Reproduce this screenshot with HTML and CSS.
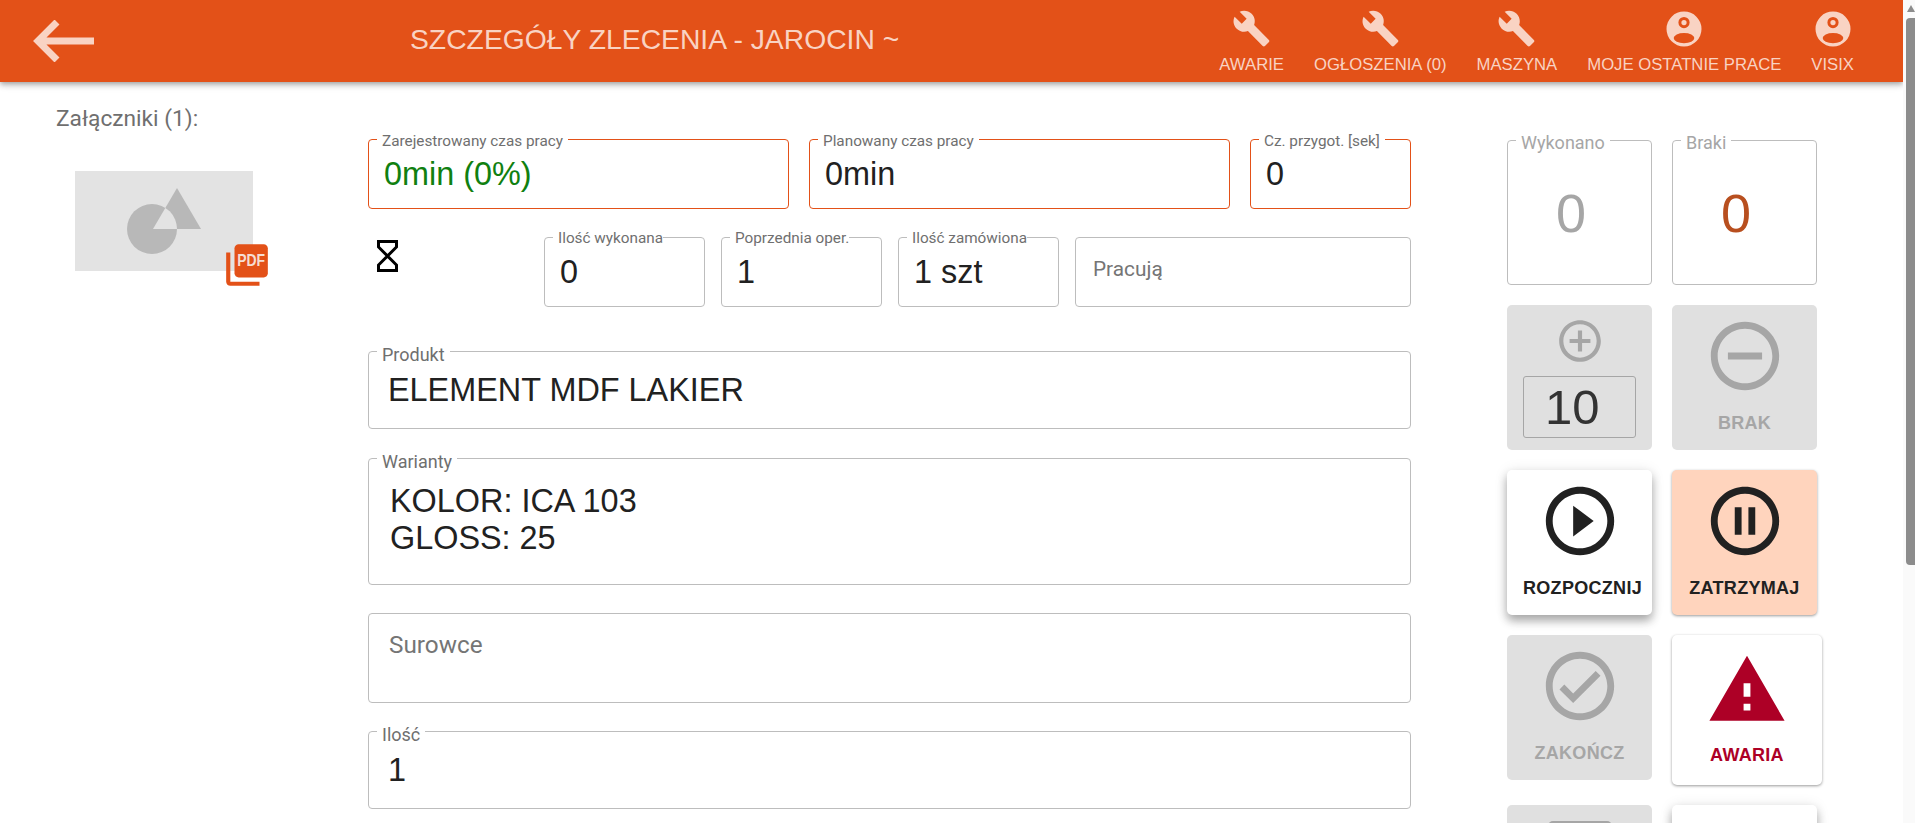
FILE: index.html
```html
<!DOCTYPE html>
<html lang="pl">
<head>
    <meta charset="UTF-8">
    <meta name="viewport" content="width=device-width, initial-scale=1.0">
    <title>Szczegóły zlecenia</title>
    <link rel="stylesheet" href="styles.css">
</head>
<body>
    <svg class="sprite" xmlns="http://www.w3.org/2000/svg">
        <symbol id="i-build" viewBox="0 0 24 24"><path d="M22.7 19l-9.1-9.1c.9-2.3.4-5-1.5-6.9-2-2-5-2.4-7.4-1.3L9 6 6 9 1.6 4.7C.4 7.1.9 10.1 2.9 12.1c1.9 1.9 4.6 2.4 6.9 1.5l9.1 9.1c.4.4 1 .4 1.4 0l2.3-2.3c.5-.4.5-1.1.1-1.4z"/></symbol>
        <symbol id="i-account" viewBox="0 0 24 24"><path fill-rule="evenodd" d="M12 2a10 10 0 1 0 0 20a10 10 0 1 0 0-20z M12 5.100a3.200 3.200 0 1 0 0 6.400a3.200 3.200 0 1 0 0-6.400z M12 6.800a1.500 1.500 0 1 0 0 3a1.500 1.500 0 1 0 0-3z M6.100 17.200a5.900 2.900 0 1 0 11.800 0a5.900 2.900 0 1 0 -11.800 0z"/></symbol>
        <symbol id="i-plus" viewBox="0 0 24 24"><path fill-rule="evenodd" d="M13 7h-2v4H7v2h4v4h2v-4h4v-2h-4V7zm-1-5C6.48 2 2 6.48 2 12s4.48 10 10 10 10-4.48 10-10S17.52 2 12 2zm0 18c-4.410 0-8-3.590-8-8s3.590-8 8-8 8 3.590 8 8-3.590 8-8 8z"/></symbol>
        <symbol id="i-minus" viewBox="0 0 24 24"><path fill-rule="evenodd" d="M7 11v2h10v-2H7zm5-9C6.48 2 2 6.48 2 12s4.48 10 10 10 10-4.48 10-10S17.52 2 12 2zm0 18c-4.410 0-8-3.590-8-8s3.590-8 8-8 8 3.590 8 8-3.590 8-8 8z"/></symbol>
        <symbol id="i-play" viewBox="0 0 24 24"><path fill-rule="evenodd" d="M10 16.500l6-4.500-6-4.500v9zM12 2C6.48 2 2 6.48 2 12s4.48 10 10 10 10-4.480 10-10S17.520 2 12 2zm0 18c-4.410 0-8-3.590-8-8s3.590-8 8-8 8 3.590 8 8-3.590 8-8 8z"/></symbol>
        <symbol id="i-pause" viewBox="0 0 24 24"><path fill-rule="evenodd" d="M9 16h2V8H9v8zm3-14C6.48 2 2 6.48 2 12s4.48 10 10 10 10-4.480 10-10S17.520 2 12 2zm0 18c-4.410 0-8-3.590-8-8s3.590-8 8-8 8 3.590 8 8-3.590 8-8 8zm1-4h2V8h-2v8z"/></symbol>
        <symbol id="i-check" viewBox="0 0 24 24"><path fill-rule="evenodd" d="M12 2C6.48 2 2 6.48 2 12s4.48 10 10 10 10-4.480 10-10S17.520 2 12 2zm0 18c-4.420 0-8-3.580-8-8s3.580-8 8-8 8 3.580 8 8-3.580 8-8 8zm4.590-12.420L10 14.170l-2.590-2.580L6 13l4 4 8-8z"/></symbol>
        <symbol id="i-warning" viewBox="0 0 24 24"><path d="M1 21h22L12 2 1 21zm12-3h-2v-2h2v2zm0-4h-2v-4h2v4z"/></symbol>
    </svg>

    <div class="page">
        <div class="main">
            <header class="topbar">
                <a class="back" href="#" aria-label="Wstecz">
                    <svg width="62" height="42" viewBox="0 0 62 42"><path d="M24 2 L5 21 L24 40 M5 21 H61" fill="none" stroke="currentColor" stroke-width="7"/></svg>
                </a>
                <h1 class="title">SZCZEGÓŁY ZLECENIA - JAROCIN ~</h1>
                <nav class="nav">
                    <a class="nav-item" href="#"><svg class="nav-icon"><use href="#i-build"/></svg>AWARIE</a>
                    <a class="nav-item" href="#"><svg class="nav-icon"><use href="#i-build"/></svg>OGŁOSZENIA (0)</a>
                    <a class="nav-item" href="#"><svg class="nav-icon"><use href="#i-build"/></svg>MASZYNA</a>
                    <a class="nav-item" href="#"><svg class="nav-icon nav-icon-user"><use href="#i-account"/></svg>MOJE OSTATNIE PRACE</a>
                    <a class="nav-item" href="#"><svg class="nav-icon nav-icon-user"><use href="#i-account"/></svg>VISIX</a>
                </nav>
            </header>

            <div class="content">
                <aside class="attachments">
                    <div class="attachments-title">Załączniki (1):</div>
                    <div class="thumb">
                        <svg class="thumb-img" width="178" height="100" viewBox="0 0 178 100">
                            <defs><clipPath id="thumb-circle"><circle cx="77" cy="58" r="25"/></clipPath></defs>
                            <rect width="178" height="100" fill="#e3e3e3"/>
                            <circle cx="77" cy="58" r="25" fill="#b8b8b8"/>
                            <path d="M102 17 L126 58 H78 Z" fill="#b8b8b8"/>
                            <path d="M102 17 L126 58 H78 Z" fill="#e3e3e3" clip-path="url(#thumb-circle)"/>
                        </svg>
                        <svg class="thumb-pdf" width="50" height="50" viewBox="0 0 24 24">
                            <path d="M20 2H8c-1.100 0-2 .9-2 2v12c0 1.100.9 2 2 2h12c1.100 0 2-.9 2-2V4c0-1.100-.9-2-2-2z" fill="#e35118"/>
                            <path d="M4 6H2v14c0 1.100.9 2 2 2h14v-2H4V6z" fill="#e35118"/>
                            <text class="pdf-text" x="7.300" y="12.700" textLength="13.400" lengthAdjust="spacingAndGlyphs">PDF</text>
                        </svg>
                    </div>
                </aside>

                <section class="details">
                    <div class="row row-top">
                        <div class="field field-accent field-grow"><span class="field-label">Zarejestrowany czas pracy</span><span class="value value-green">0min (0%)</span></div>
                        <div class="field field-accent field-grow"><span class="field-label">Planowany czas pracy</span><span class="value">0min</span></div>
                        <div class="field field-accent field-prep"><span class="field-label">Cz. przygot. [sek]</span><span class="value">0</span></div>
                    </div>
                    <div class="row row-counts">
                        <div class="hourglass">
                            <svg width="21" height="32" viewBox="0 0 21 32"><path d="M1.500 1.500 H19.500 V7 L1.500 25 V30.500 H19.500 V25 L1.500 7 Z" fill="none" stroke="#000" stroke-width="3"/></svg>
                        </div>
                        <div class="field field-small"><span class="field-label field-label-tight">Ilość wykonana</span><span class="value">0</span></div>
                        <div class="field field-small"><span class="field-label field-label-tight">Poprzednia oper.</span><span class="value">1</span></div>
                        <div class="field field-small"><span class="field-label field-label-tight">Ilość zamówiona</span><span class="value">1 szt</span></div>
                        <div class="field field-grow"><span class="placeholder placeholder-small">Pracują</span></div>
                    </div>
                    <div class="field field-product"><span class="field-label field-label-big">Produkt</span><span class="value value-product">ELEMENT MDF LAKIER</span></div>
                    <div class="field field-variants"><span class="field-label field-label-big">Warianty</span><span class="value value-variants">KOLOR: ICA 103<br>GLOSS: 25</span></div>
                    <div class="field field-materials"><span class="placeholder">Surowce</span></div>
                    <div class="field field-product field-qty"><span class="field-label field-label-big">Ilość</span><span class="value value-product">1</span></div>
                </section>

                <section class="actions">
                    <div class="stat"><span class="stat-label">Wykonano</span><span class="stat-value">0</span></div>
                    <div class="stat"><span class="stat-label">Braki</span><span class="stat-value stat-value-bad">0</span></div>

                    <div class="tile tile-off">
                        <svg class="icon-add"><use href="#i-plus"/></svg>
                        <div class="step-input">10</div>
                    </div>
                    <div class="tile tile-off">
                        <svg class="icon"><use href="#i-minus"/></svg>
                        <span class="tile-label">BRAK</span>
                    </div>
                    <div class="tile tile-raised">
                        <svg class="icon"><use href="#i-play"/></svg>
                        <span class="tile-label tile-label-start">ROZPOCZNIJ</span>
                    </div>
                    <div class="tile tile-active">
                        <svg class="icon"><use href="#i-pause"/></svg>
                        <span class="tile-label">ZATRZYMAJ</span>
                    </div>
                    <div class="tile tile-off">
                        <svg class="icon"><use href="#i-check"/></svg>
                        <span class="tile-label">ZAKOŃCZ</span>
                    </div>
                    <div class="tile tile-alarm">
                        <svg class="icon"><use href="#i-warning"/></svg>
                        <span class="tile-label">AWARIA</span>
                    </div>
                    <div class="tile tile-off"><span class="tile-stub"></span></div>
                    <div class="tile tile-raised"></div>
                </section>
            </div>
        </div>

        <div class="scrollbar">
            <span class="scroll-arrow"></span>
            <span class="scroll-thumb"></span>
        </div>
    </div>
</body>
</html>
```

FILE: styles.css
```css
* {
    box-sizing: border-box;
}
html, body {
    height: 100%;
}
body {
    margin: 0;
    overflow: hidden;
    background-color: #fff;
    color: #212121;
    font-family: "Liberation Sans", Arial, sans-serif;
}
.sprite {
    display: none;
}
.page {
    display: flex;
    height: 100vh;
}
.main {
    flex: 1;
    min-width: 0;
    overflow: hidden;
}

/* top bar */
.topbar {
    position: relative;
    z-index: 2;
    display: flex;
    height: 82px;
    background-color: #e35118;
    color: #f9d3c3;
    box-shadow: 0 2px 4px -1px rgba(0, 0, 0, .2), 0 4px 5px rgba(0, 0, 0, .14), 0 1px 10px rgba(0, 0, 0, .12);
}
.back {
    display: block;
    height: 42px;
    margin: 20px 0 0 33px;
    color: #f9d3c3;
}
.title {
    margin: 21px 0 0 315px;
    font-size: 28.300px;
    font-weight: 400;
    line-height: 36px;
}
.nav {
    display: flex;
    margin-left: auto;
    padding-right: 34px;
}
.nav-item {
    display: flex;
    flex-direction: column;
    align-items: center;
    padding: 8px 15px 0;
    color: #f9d3c3;
    font-size: 16.700px;
    line-height: 18px;
    text-decoration: none;
}
.nav-icon {
    width: 39px;
    height: 39px;
    margin: 1px 0 8px;
    fill: currentColor;
}
.nav-icon-user {
    width: 42px;
    height: 42px;
    margin: 0 0 6px;
}

.content {
    display: flex;
    align-items: flex-start;
}

/* attachments */
.attachments {
    flex: none;
    width: 368px;
    padding: 24px 0 0 56px;
}
.attachments-title {
    color: #6f6f6f;
    font-family: Roboto, sans-serif;
    font-size: 22.700px;
    line-height: 26px;
}
.thumb {
    position: relative;
    width: 178px;
    height: 100px;
    margin: 39px 0 0 19px;
}
.thumb-img {
    display: block;
}
.thumb-pdf {
    position: absolute;
    left: 147px;
    top: 69px;
}
.pdf-text {
    fill: #f6ddd2;
    font-size: 7.600px;
    font-weight: 700;
}

/* fields */
.details {
    flex: none;
    width: 1043px;
    padding-top: 57px;
}
.row {
    display: flex;
}
.row-top {
    gap: 20px;
    margin-bottom: 28px;
}
.row-counts {
    gap: 16px;
    margin-bottom: 44px;
}
.field {
    position: relative;
    display: flex;
    align-items: center;
    height: 70px;
    padding: 0 15px;
    border: 1px solid #bdbdbd;
    border-radius: 4px;
}
.field-accent {
    border-color: #e35118;
}
.field-grow {
    flex: 1;
}
.field-prep {
    flex: none;
    width: 161px;
}
.field-small {
    flex: none;
    width: 161px;
}
.field-label {
    position: absolute;
    left: 8px;
    top: -8px;
    padding: 0 5px;
    background-color: #fff;
    color: #6f6f6f;
    font-family: Roboto, sans-serif;
    font-size: 15.300px;
    line-height: 18px;
    white-space: nowrap;
}
.field-label-tight {
    top: -9px;
    padding-right: 0;
}
.field-label-big {
    top: -8px;
    font-size: 18px;
    line-height: 21px;
}
.value {
    color: #212121;
    font-size: 32.400px;
    line-height: 37px;
}
.value-green {
    color: #108010;
}
.value-product {
    padding-left: 4px;
}
.value-variants {
    padding-left: 6px;
}
.placeholder {
    color: #757575;
    font-family: Roboto, sans-serif;
    font-size: 24.300px;
    line-height: 28px;
}
.placeholder-small {
    margin: -7px 0 0 2px;
    font-size: 20.800px;
}
.hourglass {
    flex: none;
    width: 160px;
    padding: 3px 0 0 9px;
}
.field-product {
    height: 78px;
    margin-bottom: 29px;
}
.field-variants {
    align-items: flex-start;
    height: 127px;
    margin-bottom: 28px;
    padding-top: 24px;
}
.field-materials {
    align-items: flex-start;
    height: 90px;
    margin-bottom: 28px;
    padding: 17px 15px 0 20px;
}
.field-qty {
    margin-bottom: 0;
}

/* right panel */
.actions {
    display: grid;
    flex: none;
    grid-template-columns: 145px 145px;
    align-items: start;
    gap: 20px;
    margin-left: 96px;
    padding-top: 58px;
}
.stat {
    position: relative;
    display: flex;
    align-items: center;
    justify-content: center;
    height: 145px;
    padding-right: 17px;
    border: 1px solid #bdbdbd;
    border-radius: 4px;
}
.stat-label {
    position: absolute;
    left: 8px;
    top: -9px;
    padding: 0 5px;
    background-color: #fff;
    color: #a6a6a6;
    font-family: Roboto, sans-serif;
    font-size: 18px;
    line-height: 21px;
}
.stat-value {
    color: #a6a6a6;
    font-size: 54px;
    line-height: 60px;
}
.stat-value-bad {
    color: #b84f1f;
}
.tile {
    display: flex;
    flex-direction: column;
    align-items: center;
    height: 145px;
    padding-top: 10px;
    border-radius: 5px;
    background-color: #fff;
}
.tile-off {
    background-color: #e0e0e0;
    color: #a6a6a6;
}
.tile-raised {
    box-shadow: 0 6px 10px rgba(0, 0, 0, .3), 0 1px 14px rgba(0, 0, 0, .1);
}
.tile-active {
    background-color: #ffd4bd;
    box-shadow: 0 1px 3px rgba(0, 0, 0, .4);
}
.tile-alarm {
    width: 150px;
    height: 150px;
    padding-top: 14px;
    color: #ad0026;
    box-shadow: 0 1px 3px rgba(0, 0, 0, .4);
}
.icon {
    flex: none;
    width: 82px;
    height: 82px;
    fill: currentColor;
}
.icon-add {
    flex: none;
    width: 50px;
    height: 50px;
    margin-top: 1px;
    fill: currentColor;
}
.tile-label {
    margin-top: 16px;
    font-size: 18px;
    font-weight: 700;
    letter-spacing: .3px;
    line-height: 20px;
}
.tile-label-start {
    margin-left: 6px;
}
.tile-alarm .tile-label {
    margin-top: 14px;
}
.step-input {
    width: 113px;
    height: 62px;
    margin-top: 10px;
    padding-left: 21px;
    border: 1px solid #a6a6a6;
    border-radius: 3px;
    color: #333;
    font-size: 49px;
    line-height: 60px;
}
.tile-stub {
    width: 64px;
    height: 30px;
    margin-top: 6px;
    border-radius: 5px;
    background-color: #a6a6a6;
}

/* scrollbar */
.scrollbar {
    flex: none;
    display: flex;
    flex-direction: column;
    align-items: flex-end;
    width: 12px;
    padding-top: 5px;
    background-color: #fafafa;
}
.scroll-arrow {
    width: 0;
    height: 0;
    border-left: 4.500px solid transparent;
    border-right: 4.500px solid transparent;
    border-bottom: 7px solid #8c8c8c;
}
.scroll-thumb {
    width: 9px;
    height: 547px;
    margin-top: 6px;
    border-radius: 4px 0 0 4px;
    background-color: #8c8c8c;
}
```
